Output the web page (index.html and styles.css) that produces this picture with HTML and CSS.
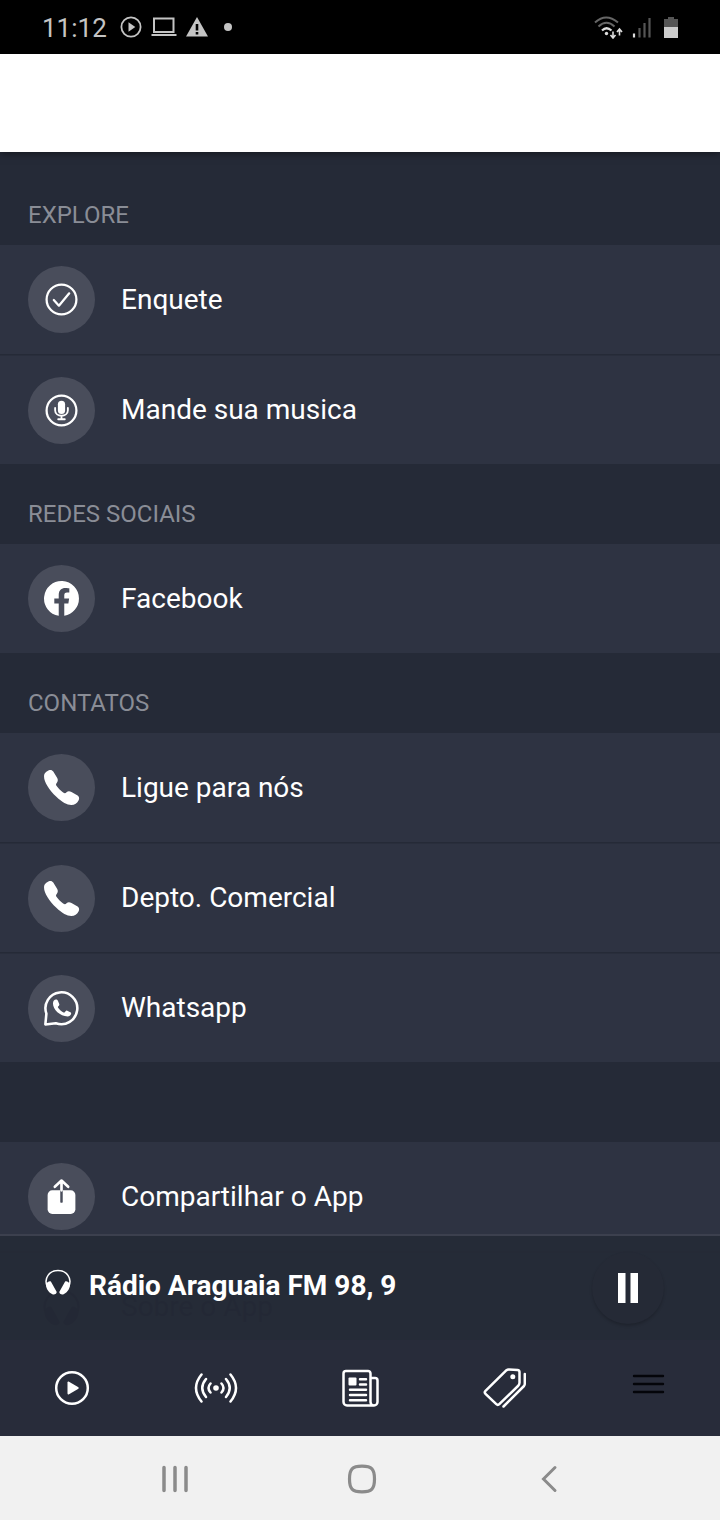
FILE: index.html
```html
<!DOCTYPE html>
<html lang="pt-BR">
<head>
    <meta charset="UTF-8">
    <meta name="viewport" content="width=device-width, initial-scale=1.0">
    <title>Rádio Araguaia FM</title>
    <link rel="stylesheet" href="styles.css">
</head>
<body>
    <div class="status-bar">
        <span class="clock">11:12</span>
        <div class="status-left">
            <svg width="22" height="22" viewBox="0 0 22 22"><circle cx="11" cy="11" r="9.6" fill="none" stroke="#c4c4c4" stroke-width="1.8"/><path d="M8.5 6.2v9.6l6.8-4.8z" fill="#c4c4c4"/></svg>
            <svg width="26" height="22" viewBox="0 0 26 22"><path d="M3 2.5h19.5v13.500H3zM.5 19h25" fill="none" stroke="#c4c4c4" stroke-width="2"/></svg>
            <svg width="22" height="22" viewBox="0 0 22 22"><path d="M11 1l11 19.500H0z" fill="#c4c4c4"/><path d="M11 8v6.500M11 16v2.500" stroke="#000" stroke-width="2.600"/></svg>
            <svg width="22" height="22" viewBox="0 0 22 22"><circle cx="11" cy="11" r="4" fill="#c4c4c4"/></svg>
        </div>
        <div class="status-right">
            <svg width="30" height="24" viewBox="0 0 30 24" fill="none" stroke-width="2"><path d="M1 7.500q11-10 23 0M4.500 11.500q8-7.500 16 0" stroke="#666"/><path d="M8 15.500q4.500-4.500 9.500 0" stroke="#ddd" stroke-width="2.200"/><circle cx="12.500" cy="18.500" r="1.700" fill="#ddd"/><path d="M19 16.500v6M16.500 20l2.500 3 2.500-3M25.500 20.500v-6M23 17l2.500-3 2.500 3" stroke="#ddd" stroke-width="1.600"/></svg>
            <svg width="20" height="24" viewBox="0 0 20 24" stroke-width="2.200"><path d="M2 18.500v4" stroke="#ddd"/><path d="M7.500 13v9.500M12.500 8v14.500M17.500 3v19.500" stroke="#555"/></svg>
            <svg width="14" height="24" viewBox="0 0 14 24"><path d="M4 2h6v2h4v8H0V4h4z" fill="#555"/><path d="M0 12h14v11H0z" fill="#ccc"/></svg>
        </div>
    </div>

    <header class="app-header"></header>

    <main class="screen">
        <section class="group">
            <h2 class="group-title">EXPLORE</h2>
            <a class="row" href="#">
                <span class="bubble">
                    <svg width="37" height="37" viewBox="0 0 36 36" fill="none" stroke="#fff" stroke-width="2.2"><circle cx="18" cy="18" r="14.500"/><path d="M10.500 18.500l5 5.500 10-12" stroke-linecap="round" stroke-linejoin="round"/></svg>
                </span>
                Enquete
            </a>
            <a class="row" href="#">
                <span class="bubble">
                    <svg width="37" height="37" viewBox="0 0 36 36" fill="none" stroke="#fff" stroke-width="2.2"><circle cx="18" cy="18" r="14.500"/><rect x="14.500" y="8.500" width="7" height="13" rx="3.500" fill="#fff" stroke="none"/><path d="M11.800 15.500v2.200c0 7.200 12.400 7.200 12.400 0v-2.200M18 23v3.500M14.800 26.500h6.400" stroke-width="1.800" stroke-linecap="round"/></svg>
                </span>
                Mande sua musica
            </a>
        </section>

        <section class="group">
            <h2 class="group-title">REDES SOCIAIS</h2>
            <a class="row" href="#">
                <span class="bubble">
                    <svg width="37" height="37" viewBox="0 0 36 36"><path d="M35 18a17 17 0 1 0-19.700 16.800V22.900H11V18h4.300v-3.700c0-4.300 2.600-6.600 6.500-6.600 1.800 0 3.800.3 3.800.3v4.200h-2.200c-2.100 0-2.700 1.300-2.700 2.600V18h4.700l-.7 4.900h-4v11.900A17 17 0 0 0 35 18z" fill="#fff"/></svg>
                </span>
                Facebook
            </a>
        </section>

        <section class="group">
            <h2 class="group-title">CONTATOS</h2>
            <a class="row" href="#">
                <span class="bubble">
                    <svg width="37" height="37" viewBox="0 0 36 36"><path d="M27.500 35c-4 0-9-2.700-14.500-8C5.800 20 1 12.500 1 7.200 1 4 3.500 2.300 5.700 1.300c1.800-.8 3.300-.2 4.300 1.200l3.700 6c1 1.700 1 3.300-.2 4.800-1.200 1.300-1 2.200-.2 3.300 1.700 2.400 3.900 4.500 6.300 6.200 1.300.9 2.200 1 3.300-.2 1.300-1.200 3-1.200 4.800-.2l6 3.500c1.500 1 1.900 2.600 1 4.500-1.300 2.700-4 4.600-7.200 4.600z" fill="#fff"/></svg>
                </span>
                Ligue para nós
            </a>
            <a class="row" href="#">
                <span class="bubble">
                    <svg width="37" height="37" viewBox="0 0 36 36"><path d="M27.500 35c-4 0-9-2.700-14.500-8C5.800 20 1 12.500 1 7.200 1 4 3.500 2.300 5.700 1.300c1.800-.8 3.300-.2 4.300 1.200l3.700 6c1 1.700 1 3.300-.2 4.800-1.200 1.300-1 2.200-.2 3.300 1.700 2.400 3.900 4.500 6.300 6.200 1.300.9 2.200 1 3.300-.2 1.300-1.200 3-1.200 4.800-.2l6 3.500c1.500 1 1.900 2.600 1 4.500-1.300 2.700-4 4.600-7.200 4.600z" fill="#fff"/></svg>
                </span>
                Depto. Comercial
            </a>
            <a class="row" href="#">
                <span class="bubble">
                    <svg width="37" height="37" viewBox="0 0 36 36"><path d="M2.300 33.500l1-10.500A15.500 15.500 0 1 1 12.500 32.300z" fill="none" stroke="#fff" stroke-width="2.500" stroke-linejoin="round"/><path d="M24 25.700c-7.500 0-14.300-6.700-14.300-12.500 0-2.400 1.400-3.900 2.900-3.900 1 0 1.500.3 1.900 1.200l1.300 3c.3.700.1 1.400-.9 2.400-.6.600-.5 1 0 1.700 1.300 1.900 2.800 3.200 5 4.200.6.300 1 .2 1.500-.4 1-1.200 1.500-1.700 2.200-1.300l3 1.500c.8.400.9 1 .7 1.800-.4 1.500-1.800 2.300-3.300 2.300z" fill="#fff"/></svg>
                </span>
                Whatsapp
            </a>
        </section>

        <section class="group">
            <h2 class="group-title"></h2>
            <a class="row" href="#">
                <span class="bubble">
                    <svg width="37" height="37" viewBox="0 0 36 36" fill="none"><rect x="4.500" y="12" width="27" height="23" rx="4.500" fill="#fff"/><path d="M18 12v11" stroke="#494d5b" stroke-width="2.400" stroke-linecap="round"/><path d="M18 12V3M11.500 8.500l6.500-6 6.500 6" stroke="#fff" stroke-width="2.600" stroke-linecap="round" stroke-linejoin="round"/></svg>
                </span>
                Compartilhar o App
            </a>
            <a class="row row-about" href="#">
                <span class="bubble">
                    <svg width="37" height="37" viewBox="0 0 26 26"><path d="M2.200 17.500C-1.500 9 4.500 1.500 13 1.500S27.500 9 23.800 17.500" fill="none" stroke="currentColor" stroke-width="1.500"/><path d="M6 12.800l5.600 10c.7 2-2.600 3.200-4.200 2.400C2.700 23 .5 18 1.300 15.200 2 13.200 5 11.500 6 12.800zM20 12.800l-5.600 10c-.7 2 2.600 3.200 4.200 2.400 4.700-2.200 6.900-7.200 6.100-10-.7-2-3.700-3.700-4.700-2.400z" fill="currentColor"/></svg>
                </span>
                Sobre o App
            </a>
        </section>

        <div class="dock">
            <div class="player">
                <svg class="player-icon" width="26" height="26" viewBox="0 0 26 26"><path d="M2.200 17.500C-1.500 9 4.500 1.500 13 1.500S27.500 9 23.800 17.500" fill="none" stroke="currentColor" stroke-width="1.500"/><path d="M6 12.800l5.600 10c.7 2-2.600 3.200-4.200 2.400C2.700 23 .5 18 1.300 15.200 2 13.200 5 11.500 6 12.800zM20 12.800l-5.600 10c-.7 2 2.600 3.200 4.200 2.400 4.700-2.200 6.900-7.200 6.100-10-.7-2-3.700-3.700-4.700-2.400z" fill="currentColor"/></svg>
                <strong class="player-title">Rádio Araguaia FM 98, 9</strong>
                <button class="pause" type="button" aria-label="Pausar">
                    <svg width="20" height="30" viewBox="0 0 20 30"><path d="M0 0h7.500v30H0zM12.500 0H20v30h-7.500z" fill="#fff"/></svg>
                </button>
            </div>
            <nav class="tabs">
                <a href="#" aria-label="Ao vivo">
                    <svg width="36" height="36" viewBox="0 0 36 36"><circle cx="18" cy="18" r="15.800" fill="none" stroke="#fff" stroke-width="2.500"/><path d="M13.500 12.500v11c0 1 .8 1.200 1.500.8l9-5.200c1-.6 1-1.500 0-2.100l-9-5.200c-.7-.4-1.500-.2-1.500.7z" fill="#fff"/></svg>
                </a>
                <a href="#" aria-label="Rádios">
                    <svg width="44" height="36" viewBox="0 0 44 36" fill="none" stroke="#fff" stroke-width="2.500" stroke-linecap="round"><circle cx="22" cy="18" r="2.800" fill="#fff" stroke="none"/><path d="M16.500 13.500q-4 4.500 0 9M12 9q-7.500 9 0 18M7.500 4.500q-11 13.500 0 27M27.500 13.500q4 4.500 0 9M32 9q7.500 9 0 18M36.500 4.500q11 13.500 0 27"/></svg>
                </a>
                <a href="#" aria-label="Notícias">
                    <svg width="38" height="38" viewBox="-1 0 38 38" fill="none" stroke="#fff" stroke-width="2.500" stroke-linecap="round" stroke-linejoin="round"><path d="M32 36.500H5a3.500 3.500 0 0 1-3.500-3.500V4.500A2.500 2.500 0 0 1 4 2h22a2.500 2.500 0 0 1 2.500 2.500V33a3.500 3.500 0 0 0 7 0V11.500a2.500 2.500 0 0 0-2.500-2.500h-4.500"/><path d="M18 10.200h6M18 15.500h6M8 20.700h16M8 26h16M8 31.200h16"/><rect x="6.500" y="8.500" width="8" height="8" rx="1" fill="#fff" stroke="none"/></svg>
                </a>
                <a href="#" aria-label="Promoções">
                    <svg width="44" height="40" viewBox="-1 0 44 40" fill="none" stroke="#fff" stroke-width="2.500" stroke-linecap="round" stroke-linejoin="round"><path d="M23.500 2.200L2.500 22.800q-1.500 1.500 0 3L13.300 36.200q1.500 1.500 3 0L35 18q1.500-1.500 1.500-3.200V4q0-2-2-2.100l-8.500-.4q-1.500-.1-2.500.7zM20.500 38.500L41 18q.8-1 .8-2.500V6"/><circle cx="29.800" cy="8.800" r="2.500" fill="#fff" stroke="none"/></svg>
                </a>
                <a class="tab-menu" href="#" aria-label="Menu">
                    <svg width="34" height="20" viewBox="0 0 34 20"><path d="M3 2h29M3 10h29M3 18h29" stroke="#04050a" stroke-width="2.400" stroke-linecap="round"/></svg>
                </a>
            </nav>
        </div>
    </main>

    <div class="nav-bar">
        <button type="button" aria-label="Recentes">
            <svg width="28" height="28" viewBox="0 0 28 28"><path d="M3 2.500v23M14 2.500v23M25 2.500v23" stroke="#8b8b8b" stroke-width="3.500" stroke-linecap="round"/></svg>
        </button>
        <button type="button" aria-label="Início">
            <svg width="30" height="30" viewBox="0 0 30 30"><path d="M15 2.200c9.800 0 12.500 3 12.500 12.800S24.800 27.800 15 27.800 2.500 24.800 2.500 15 5.200 2.200 15 2.200z" fill="none" stroke="#8b8b8b" stroke-width="3.200"/></svg>
        </button>
        <button type="button" aria-label="Voltar">
            <svg width="18" height="28" viewBox="0 0 18 28"><path d="M15 2.500L3.500 14 15 25.500" fill="none" stroke="#8b8b8b" stroke-width="3" stroke-linecap="round"/></svg>
        </button>
    </div>
</body>
</html>
```
FILE: styles.css
```css
* {
    box-sizing: border-box;
}
body {
    margin: 0;
    min-height: 100vh;
    display: flex;
    flex-direction: column;
    font-family: Roboto, "Liberation Sans", sans-serif;
    background-color: #252a37;
    color: #fff;
}
svg {
    display: block;
    flex: none;
}
a {
    color: inherit;
    text-decoration: none;
}
button {
    padding: 0;
    border: none;
    background: none;
    cursor: pointer;
}

/* status bar */
.status-bar {
    display: flex;
    align-items: center;
    height: 54px;
    padding: 0 42px;
    background-color: #000;
}
.clock {
    padding-top: 2px;
    font-size: 26px;
    line-height: 32px;
    color: #c4c4c4;
}
.status-left {
    display: flex;
    gap: 9px;
    margin-left: 13px;
}
.status-right {
    display: flex;
    gap: 8px;
    margin-left: auto;
}
.status-right svg:last-child {
    margin-left: 4px;
}

.app-header {
    height: 98px;
    background-color: #fff;
    box-shadow: 0 1px 8px rgba(0, 0, 0, 0.5);
}

/* menu list */
.screen {
    flex: 1;
    position: relative;
    padding-top: 13px;
}
.group {
    display: flex;
    flex-direction: column;
    gap: 1px;
}
.group-title {
    height: 80px;
    margin: 0 0 -1px;
    padding: 36px 28px 16px;
    font-size: 24px;
    line-height: 28px;
    font-weight: 400;
    color: #8a8d96;
}
.row {
    display: flex;
    align-items: center;
    gap: 26px;
    height: 109px;
    padding: 0 28px;
    background-color: #2e3342;
    font-size: 28px;
    line-height: 32px;
}
.row + .row {
    border-top: 1px solid #292e3c;
}
.bubble {
    display: flex;
    align-items: center;
    justify-content: center;
    width: 67px;
    height: 67px;
    border-radius: 50%;
    background-color: #494d5b;
}
.row-about {
    color: #000a20;
}
.row-about .bubble {
    background: none;
}

/* player and tabs over the list */
.dock {
    position: absolute;
    left: 0;
    right: 0;
    bottom: 0;
}
.player {
    display: flex;
    align-items: center;
    height: 106px;
    padding: 0 56px 0 45px;
    border-top: 2px solid #3c404e;
    background-color: rgba(37, 42, 54, 0.94);
}
.player-icon {
    margin-bottom: 12px;
}
.player-title {
    margin-left: 18px;
    padding-bottom: 4px;
    font-size: 28px;
    line-height: 32px;
}
.pause {
    display: flex;
    align-items: center;
    justify-content: center;
    width: 72px;
    height: 72px;
    margin-left: auto;
    border-radius: 50%;
    background-color: #252a36;
    box-shadow: 0 2px 3px rgba(0, 0, 0, 0.18);
}
.tabs {
    display: flex;
    height: 96px;
    background-color: #282c3a;
}
.tabs a {
    flex: 1;
    display: flex;
    align-items: center;
    justify-content: center;
}
.tabs .tab-menu {
    padding-bottom: 8px;
}

/* system buttons */
.nav-bar {
    display: flex;
    height: 84px;
    padding: 2px 78px 0 82px;
    background-color: #f1f1f1;
}
.nav-bar button {
    flex: 1;
    display: flex;
    align-items: center;
    justify-content: center;
}
```
